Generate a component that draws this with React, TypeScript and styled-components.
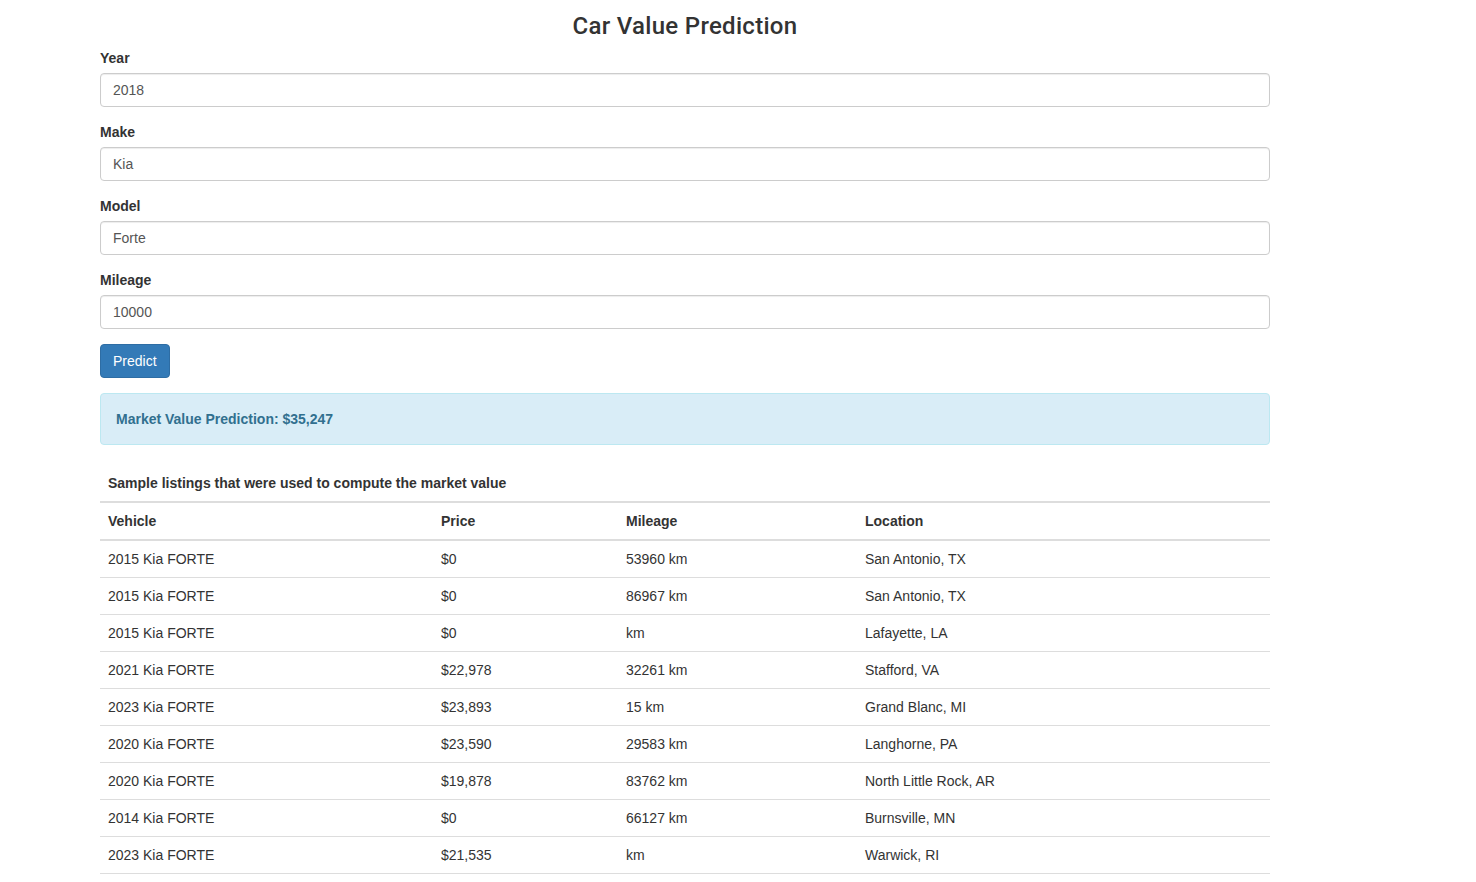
import React from "react";
import styled, { createGlobalStyle } from "styled-components";

const Global = createGlobalStyle`
  html, body { margin: 0; padding: 0; background: #fff; }
  body {
    font-family: "Liberation Sans", Arial, Helvetica, sans-serif;
    font-size: 14px;
    line-height: 20px;
    color: #333;
  }
  * { box-sizing: border-box; }
`;

const Page = styled.div`
  width: 1170px;
  margin-left: 100px;
`;

const Title = styled.h3`
  margin: 13px 0 9px;
  font-family: Roboto, "Liberation Sans", Arial, sans-serif;
  font-size: 24px;
  line-height: 26px;
  font-weight: 500;
  letter-spacing: 0.3px;
  text-align: center;
  color: #333;
`;

const Form = styled.form`
  display: flex;
  flex-direction: column;
`;

const Group = styled.div`
  display: flex;
  flex-direction: column;
  margin-bottom: 15px;
`;

const Label = styled.label`
  font-weight: 700;
  margin-bottom: 5px;
`;

const Input = styled.input`
  height: 34px;
  padding: 6px 12px;
  font-family: inherit;
  font-size: 14px;
  line-height: 20px;
  color: #555;
  background: #fff;
  border: 1px solid #ccc;
  border-radius: 4px;
  box-shadow: inset 0 1px 1px rgba(0, 0, 0, 0.075);
  outline: none;
`;

const Button = styled.button`
  align-self: flex-start;
  height: 34px;
  padding: 6px 12px;
  font-family: inherit;
  font-size: 14px;
  line-height: 20px;
  color: #fff;
  background: #337ab7;
  border: 1px solid #2e6da4;
  border-radius: 4px;
  cursor: pointer;
`;

const Alert = styled.div`
  margin: 15px 0 20px;
  padding: 15px;
  background: #d9edf7;
  border: 1px solid #bce8f1;
  border-radius: 4px;
  color: #31708f;
  font-weight: 700;
`;

const Table = styled.table`
  width: 100%;
  border-collapse: collapse;
  border-spacing: 0;
  border-bottom: 1px solid #ddd;
`;

const Caption = styled.caption`
  text-align: left;
  padding: 8px;
  font-weight: 700;
  color: #333;
`;

const Th = styled.th<{ $w: number }>`
  width: ${(p) => p.$w}px;
  text-align: left;
  padding: 8px;
  font-weight: 700;
  border-top: 2px solid #ddd;
  border-bottom: 2px solid #ddd;
`;

const Td = styled.td`
  padding: 8px;
  border-top: 1px solid #ddd;
  vertical-align: top;
`;

const rows = [
  ["2015 Kia FORTE", "$0", "53960 km", "San Antonio, TX"],
  ["2015 Kia FORTE", "$0", "86967 km", "San Antonio, TX"],
  ["2015 Kia FORTE", "$0", "km", "Lafayette, LA"],
  ["2021 Kia FORTE", "$22,978", "32261 km", "Stafford, VA"],
  ["2023 Kia FORTE", "$23,893", "15 km", "Grand Blanc, MI"],
  ["2020 Kia FORTE", "$23,590", "29583 km", "Langhorne, PA"],
  ["2020 Kia FORTE", "$19,878", "83762 km", "North Little Rock, AR"],
  ["2014 Kia FORTE", "$0", "66127 km", "Burnsville, MN"],
  ["2023 Kia FORTE", "$21,535", "km", "Warwick, RI"],
];

const fields = [
  ["Year", "2018"],
  ["Make", "Kia"],
  ["Model", "Forte"],
  ["Mileage", "10000"],
];

export default function App() {
  return (
    <>
      <Global />
      <Page>
        <Title>Car Value Prediction</Title>
        <Form onSubmit={(e) => e.preventDefault()}>
          {fields.map(([label, value]) => (
            <Group key={label}>
              <Label>{label}</Label>
              <Input defaultValue={value} />
            </Group>
          ))}
          <Button type="submit">Predict</Button>
        </Form>
        <Alert>Market Value Prediction: $35,247</Alert>
        <Table>
          <Caption>Sample listings that were used to compute the market value</Caption>
          <thead>
            <tr>
              <Th $w={333}>Vehicle</Th>
              <Th $w={185}>Price</Th>
              <Th $w={239}>Mileage</Th>
              <Th $w={413}>Location</Th>
            </tr>
          </thead>
          <tbody>
            {rows.map((r, i) => (
              <tr key={i}>
                {r.map((c, j) => (
                  <Td key={j}>{c}</Td>
                ))}
              </tr>
            ))}
          </tbody>
        </Table>
      </Page>
    </>
  );
}
